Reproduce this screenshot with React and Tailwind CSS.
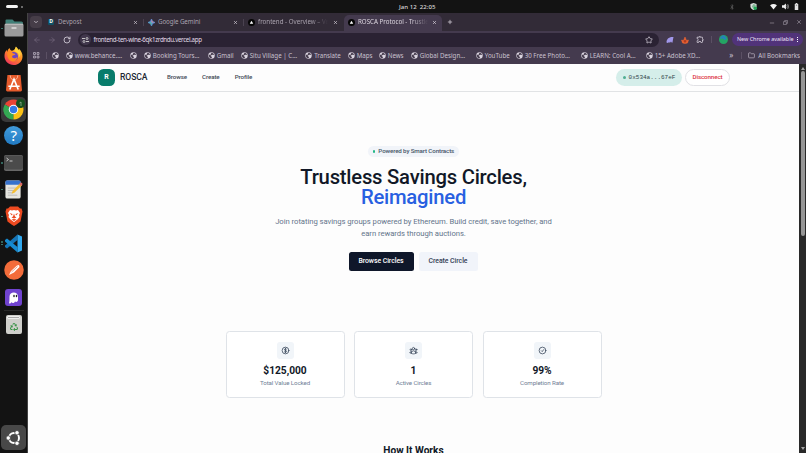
import { FaRecycle, FaBluetoothB } from 'react-icons/fa';
import { HiOutlineCheckCircle, HiOutlineCurrencyDollar, HiOutlineUserGroup } from 'react-icons/hi2';
import { MdOutlineExtension } from 'react-icons/md';
import {
  ArrowLeft,
  ArrowRight,
  ChevronDown,
  Folder,
  Minus,
  Plus,
  RotateCw,
  Star,
  X,
} from 'lucide-react';

const bookmarks = [
  { label: '', box: 'w-[14px]', text: '' },
  { label: 'www.behance.…', box: 'w-[64px]', text: 'w-[50px]' },
  { label: '', box: 'w-[14px]', text: '' },
  { label: 'Booking Tours…', box: 'w-[64px]', text: 'w-[50px]' },
  { label: 'Gmail', box: 'w-[33px]', text: 'w-[20px]' },
  { label: 'Situ Village | C…', box: 'w-[64.5px]', text: 'w-[50px]' },
  { label: 'Translate', box: 'w-[42.5px]', text: 'w-[30px]' },
  { label: 'Maps', box: 'w-[31px]', text: 'w-[20px]' },
  { label: 'News', box: 'w-[32px]', text: 'w-[20px]' },
  { label: 'Global Design…', box: 'w-[65px]', text: 'w-[50px]' },
  { label: 'YouTube', box: 'w-[40px]', text: 'w-[30px]' },
  { label: '30 Free Photo…', box: 'w-[65px]', text: 'w-[50px]' },
  { label: 'LEARN: Cool A…', box: 'w-[65px]', text: 'w-[50px]' },
  { label: '15+ Adobe XD…', box: 'w-[65px]', text: 'w-[50px]' },
];

const stats = [
  { icon: HiOutlineCurrencyDollar, value: '$125,000', label: 'Total Value Locked' },
  { icon: HiOutlineUserGroup, value: '1', label: 'Active Circles' },
  { icon: HiOutlineCheckCircle, value: '99%', label: 'Completion Rate' },
];

const Globe = () => (
  <svg viewBox="0 0 16 16" className="size-[7px] shrink-0">
    <circle cx="8" cy="8" r="7.3" fill="#d9d3de" />
    <path d="M2 6c3 0 5 1 5 3s2 1 2 3-1 2-2 2C4 14 1 10 2 6zM8 1.8c3 0 5 2 6 4.700-2 1-3-.5-4 0s-1 1.500-2.500 1S5 5.500 6.500 4.500 7 2.500 8 1.800z" fill="#483e50" />
  </svg>
);

const VercelMark = () => (
  <svg viewBox="0 0 16 16" className="size-[7px] shrink-0">
    <circle cx="8" cy="8" r="8" fill="#050505" />
    <path d="M8 4l4 7H4z" fill="#fff" />
  </svg>
);

const TopBar = () => (
  <div className="flex h-[13px] shrink-0 items-center bg-[#131313] text-[#d8d8d8]">
    <div className="flex w-[399px] items-center gap-[3px] pl-[6px]">
      <span className="h-[3.500px] w-[12px] rounded-full bg-[#f2f2f2]" />
      <span className="size-[2px] rounded-full bg-[#8b8b8b]" />
    </div>
    <div className="whitespace-pre text-[6.100px] font-medium">Jan 12  22:05</div>
    <div className="ml-auto flex items-center pr-[7px]">
      <FaBluetoothB className="mr-[15px] size-[6px] text-[#606060]" />
      <svg viewBox="0 0 16 16" className="mr-[13px] size-[7px]">
        <path d="M8 0l7 2v6c0 4-4 7-7 8-3-1-7-4-7-8V2z" fill="#d9dfdc" />
        <path d="M8 2l5 2v4L7 12 4 8z" fill="#82b795" />
        <circle cx="12" cy="12" r="4" fill="#25a859" />
      </svg>
      <svg viewBox="0 0 16 14" className="mr-[5.500px] h-[6px] w-[7px]">
        <path d="M0 3q8-6 16 0L8 13z" fill="#f2f2f2" />
      </svg>
      <svg viewBox="0 0 16 16" className="mr-[5px] size-[7px]">
        <path d="M0 5h4l5-4v14l-5-4H0z" fill="#eee" />
        <path d="M11 5q2 3 0 6M13 2.500q4 5.500 0 11" fill="none" stroke="#bbb" strokeWidth="1.600" />
      </svg>
      <svg viewBox="0 0 10 16" className="h-[7px] w-[5px]">
        <path d="M3 0h4v2h2v14H1V2h2z" fill="#e4e4e4" />
        <path d="M3.500 4h3v2h-3z" fill="#777" />
      </svg>
    </div>
  </div>
);

const DockItem = ({ dots = 0, active = false, children }) => (
  <div className="flex h-[26.860px] shrink-0 items-center">
    <div className="flex w-[3.500px] flex-col items-center gap-[1px]">
      {Array.from({ length: dots }, (_, i) => (
        <span key={i} className="size-[1.700px] rounded-full bg-[#3f8377]" />
      ))}
    </div>
    <div
      className={
        active
          ? '-ml-[2.500px] flex size-[25px] items-center justify-center rounded-[5px] bg-[#393939]'
          : 'flex w-[20.500px] items-center justify-center'
      }
    >
      {children}
    </div>
  </div>
);

const Dock = () => (
  <aside className="flex w-[28px] shrink-0 flex-col border-r border-[#444] bg-[#131313] pt-[2px]">
    <DockItem dots={1}>
      <svg viewBox="0 0 40 36" className="h-[18px] w-[20px]">
        <path d="M3 3q0-2 2-2h12l4 4h14q3 0 3 3v8H3z" fill="#408078" />
        <rect x="1" y="9" width="38" height="26" rx="3" fill="#9b9b9b" />
        <path d="M2 10h36v2H2z" fill="#b8b8b8" />
        <path d="M15 17h10v2H15z" fill="#fff" />
      </svg>
    </DockItem>
    <DockItem>
      <svg viewBox="0 0 40 40" className="size-[19px]">
        <defs>
          <linearGradient id="fox" x1="0.9" y1="0" x2="0.200" y2="1">
            <stop offset="0" stopColor="#ffe34a" />
            <stop offset="0.450" stopColor="#ff8b24" />
            <stop offset="1" stopColor="#ef3060" />
          </linearGradient>
        </defs>
        <path d="M25 1c3 3 5 5 6 8 1-1 1-2 1-3 5 6 7 11 7 16 0 11-9 18-19 18S1 32 1 21C1 15 3 11 6 8c0 2 0 3 1 4 1-4 2-6 5-8 0 3 2 5 5 6 4-1 7-3 8-9z" fill="url(#fox)" />
        <circle cx="20" cy="22" r="9.500" fill="#6b45c7" />
        <path d="M7 14c5-4 10-2 12 2 3 0 4 1 5 2-2 2-7 1-7 4 0 4 7 5 11 1 0 7-6 11-12 9S6 22 7 14z" fill="#ff8a20" />
        <path d="M24 12c6 1 9 7 6 12 4-1 6-7 4-12-3-5-7-6-9-10-2 4-4 7-1 10z" fill="#ffd43a" />
      </svg>
    </DockItem>
    <DockItem>
      <svg viewBox="0 0 34 40" className="h-[19px] w-[16px]">
        <path d="M3 4h28l3 32q0 3-3 3H3q-3 0-3-3z" fill="#e65b2c" />
        <path d="M9 5q0 9 8 9t8-9" fill="none" stroke="#ffc0a5" strokeWidth="2" />
        <path d="M8 35l9-22 9 22M5 28h24" fill="none" stroke="#fff" strokeWidth="3.500" />
      </svg>
    </DockItem>
    <DockItem dots={1} active>
      <svg viewBox="0 0 44 42" className="h-[21px] w-[22px]">
        <path d="M21 21L3.700 11A20 20 0 0 1 38.300 11z" fill="#e94335" />
        <path d="M21 21L3.700 11A20 20 0 0 0 21 41z" fill="#34a853" />
        <path d="M21 21l17.300-10A20 20 0 0 1 21 41z" fill="#fbc116" />
        <path d="M21 12h17v6H21z" fill="#e94335" />
        <path d="M5 12l9 14 7 5-5 9C7 38 1 30 1 21c0-4 1-6 4-9z" fill="#34a853" />
        <circle cx="21" cy="21" r="9.500" fill="#fff" />
        <circle cx="21" cy="21" r="7.500" fill="#3478e5" />
        <circle cx="35" cy="9" r="9" fill="#17501f" />
        <path d="M33 8l3-2v8" fill="none" stroke="#9bb99e" strokeWidth="1.500" />
      </svg>
    </DockItem>
    <DockItem>
      <div className="flex size-[19px] items-center justify-center rounded-full bg-linear-to-b from-[#409bdb] to-[#217ac2] text-[15px] leading-none text-white">?</div>
    </DockItem>
    <DockItem dots={1}>
      <svg viewBox="0 0 38 32" className="h-[16px] w-[19px]">
        <rect width="38" height="32" rx="4" fill="#686868" />
        <rect y="1" width="38" height="28" rx="4" fill="#4b4b4b" />
        <path d="M5 6l4 3-4 3M11 12h6" fill="none" stroke="#ddd" strokeWidth="1.700" />
      </svg>
    </DockItem>
    <DockItem dots={1}>
      <svg viewBox="0 0 38 40" className="h-[19px] w-[19px]">
        <rect x="2" y="1" width="32" height="38" rx="4" fill="#e6e5e0" />
        <path d="M2 10V4q0-3 3-3h26q3 0 3 3v6z" fill="#3672cd" />
        <path d="M7 17h19M7 22h13M7 27h10M7 32h20" stroke="#aaa" strokeWidth="1.500" />
        <path d="M15 29l2-6L33 7l4 4-16 16z" fill="#f5be35" />
        <path d="M31 9l3-4q4 0 4 4l-3 4z" fill="#d96868" />
      </svg>
    </DockItem>
    <DockItem dots={1}>
      <svg viewBox="0 0 36 40" className="h-[20px] w-[18px]">
        <path d="M10 1h16l4 4h3l2 6-4 20-8 6-5 3-5-3-8-6L1 11l2-6h3z" fill="#ee4a20" />
        <path d="M10 8l4 1 4-1 4 1 4-1 4 6-2 4 1 4-4 5-7 5-7-5-4-5 1-4-2-4z" fill="#fff" />
        <path d="M9 14l6 2-1 3zM27 14l-6 2 1 3zM18 15l2 6 3 2-5 2-5-2 3-2zM13 27l5-1 5 1-5 3z" fill="#ee4a20" />
      </svg>
    </DockItem>
    <DockItem dots={2}>
      <svg viewBox="0 0 38 38" className="size-[19px]">
        <path d="M27 1v11L6 29l-4-3v-3L27 1z" fill="#1575b7" />
        <path d="M27 37V26L6 9l-4 3v3l25 22z" fill="#168bd1" />
        <path d="M27 1l9 4v28l-9 4z" fill="#31a8ee" />
      </svg>
    </DockItem>
    <DockItem>
      <svg viewBox="0 0 40 40" className="size-[20px]">
        <circle cx="20" cy="20" r="19.500" fill="#f36c3a" />
        <path d="M10 30l4-8L26 11l4-1 1 4-11 11zM10 30l10-5" fill="#fff" />
        <path d="M15 24l12-11" stroke="#e9845f" strokeWidth="1.500" />
      </svg>
    </DockItem>
    <DockItem>
      <svg viewBox="0 0 34 34" className="size-[17px]">
        <rect width="34" height="34" rx="6" fill="#7043cf" />
        <path d="M8 28q1-2 1-13c0-11 17-11 17 0v7c0 3-3 5-6 3-2 4-6 4-7 1-1 3-4 4-5 2z" fill="#fff" />
        <ellipse cx="18" cy="14" rx="1.500" ry="2.500" fill="#222" />
        <ellipse cx="23" cy="14" rx="1.500" ry="2.500" fill="#222" />
      </svg>
    </DockItem>
    <div className="ml-[4px] h-px w-[20px] shrink-0 bg-[#292929]" />
    <DockItem>
      <div className="flex h-[19px] w-[16px] flex-col items-center rounded-[2px] bg-[#cfcfcb] pt-[1px]">
        <span className="h-[2.500px] w-[13px] rounded-[1px] border border-[#eee] bg-[#aaa]" />
        <FaRecycle className="mt-[4px] size-[8px] text-[#3b9348]" />
      </div>
    </DockItem>
    <div className="mt-auto mb-[3px] ml-[1px] flex size-[25px] items-center justify-center rounded-[5px] bg-[#484848]">
      <svg viewBox="0 0 32 32" className="size-[16px]">
        <circle cx="16" cy="16" r="10" fill="none" stroke="#fff" strokeWidth="4" />
        <g fill="#fff" stroke="#484848" strokeWidth="1.800">
          <circle cx="4.500" cy="16" r="4.500" />
          <circle cx="22" cy="5.500" r="4.500" />
          <circle cx="22" cy="26.500" r="4.500" />
        </g>
      </svg>
    </div>
  </aside>
);

const Tabs = () => (
  <div className="flex h-[18px] shrink-0 items-center bg-[#322b37] text-[6.200px] text-[#aaa3ae]">
    <div className="ml-[2px] flex size-[12px] items-center justify-center rounded-[4px] bg-[#463d48]">
      <ChevronDown className="size-[6px] text-[#d8d2db]" strokeWidth={3} />
    </div>
    <div className="flex h-[16px] w-[101px] items-center pr-[5px] pl-[6px]">
      <span className="flex size-[6px] items-center justify-center rounded-[1px] bg-[#105064] text-[5px] font-bold text-white">D</span>
      <span className="ml-[4px]">Devpost</span>
      <X className="ml-auto size-[5px] text-[#d6d0d9]" strokeWidth={3} />
    </div>
    <span className="h-[7px] w-px bg-[#4a4250]" />
    <div className="flex h-[16px] w-[99px] items-center pr-[5px] pl-[4px]">
      <svg viewBox="0 0 16 16" className="size-[7px]">
        <path d="M8 0q1 7 8 8-7 1-8 8-1-7-8-8 7-1 8-8z" fill="#5d9df2" stroke="#5d9df2" strokeWidth="1.500" />
        <path d="M8 0q1 7 8 8H8z" fill="#d88181" />
        <path d="M0 8h8v8q-1-7-8-8z" fill="#57b577" />
      </svg>
      <span className="ml-[3px] tracking-[-0.08px]">Google Gemini</span>
      <X className="ml-auto size-[5px] text-[#d6d0d9]" strokeWidth={3} />
    </div>
    <span className="h-[7px] w-px bg-[#4a4250]" />
    <div className="flex h-[16px] w-[100px] items-center pr-[6px] pl-[4px]">
      <VercelMark />
      <span className="ml-[3px] w-[70px] overflow-hidden mask-r-from-75% whitespace-nowrap">frontend - Overview – Vercel</span>
      <X className="ml-auto size-[5px] text-[#d6d0d9]" strokeWidth={3} />
    </div>
    <div className="mt-[2px] flex h-[16px] w-[98px] items-center rounded-t-[5px] bg-[#443a4e] pr-[5px] pb-[2px] pl-[4px] text-[#ded8e1]">
      <VercelMark />
      <span className="ml-[3px] w-[70px] overflow-hidden mask-r-from-75% whitespace-nowrap">ROSCA Protocol - Trustless</span>
      <X className="ml-auto size-[5px]" strokeWidth={3} />
    </div>
    <Plus className="ml-[5px] size-[6px] text-[#d6d0d9]" strokeWidth={3} />
    <div className="ml-auto flex items-center gap-[8px] pr-[4px] text-[#8d8592]">
      <Minus className="mt-[2px] size-[6px]" strokeWidth={3} />
      <svg viewBox="0 0 12 12" className="size-[5px]">
        <path d="M1 4h7v7H1zM4 4V1h7v7H8" fill="none" stroke="currentColor" strokeWidth="1.800" />
      </svg>
      <X className="size-[6px]" strokeWidth={3} />
    </div>
  </div>
);

const Toolbar = () => (
  <div className="flex h-[17px] shrink-0 items-center bg-[#443a4e] text-[#d6d0dc]">
    <ArrowLeft className="ml-[5px] size-[8px] text-[#776b80]" />
    <ArrowRight className="ml-[7px] size-[8px] text-[#776b80]" />
    <RotateCw className="ml-[7px] size-[8px]" strokeWidth={2.500} />
    <div className="ml-[7px] flex h-[14px] w-[581px] items-center rounded-full bg-[#2a2233]">
      <span className="ml-[2px] flex size-[11px] items-center justify-center rounded-full bg-[#41374c]">
        <svg viewBox="0 0 14 12" className="h-[6px] w-[7px]">
          <path d="M0 3h6M8 9h6" stroke="#ddd" strokeWidth="1.700" />
          <g fill="none" stroke="#ddd" strokeWidth="1.500">
            <circle cx="10" cy="3" r="2" />
            <circle cx="4" cy="9" r="2" />
          </g>
        </svg>
      </span>
      <span className="ml-[2.500px] text-[6.200px] tracking-[-0.33px] text-[#e3dde8]">frontend-ten-wine-6qk1zrdndu.vercel.app</span>
      <Star className="mr-[6px] ml-auto size-[8px]" strokeWidth={2.200} />
    </div>
    <svg viewBox="0 0 16 16" className="ml-[7px] size-[8px]">
      <path d="M1 13C1 6 6 1 15 2q-1 4-2 11-2 1-3-2-2 4-4 1-2 3-5 1z" fill="#a197ea" />
    </svg>
    <svg viewBox="0 0 16 16" className="ml-[7px] size-[8px]">
      <path d="M1 8l4 1 3-7 3 7 4-1-2 6-5 1-5-1z" fill="#ee6432" stroke="#ee6432" />
      <path d="M5 10l3-3 3 3-1 3H6z" fill="#b13b22" />
    </svg>
    <MdOutlineExtension className="ml-[7px] size-[8.500px]" />
    <span className="ml-[6px] h-[7px] w-px bg-[#5b5064]" />
    <svg viewBox="0 0 16 16" className="ml-[7px] size-[9px]">
      <circle cx="8" cy="8" r="8" fill="#24a464" />
      <path d="M3 3q4-5 8-1l3 5-4 2-3-3-5 1z" fill="#2583b8" />
    </svg>
    <div className="ml-auto mr-[3px] flex h-[13.500px] w-[71px] items-center rounded-full bg-[#51337a] pl-[5px]">
      <span className="text-[5.400px] whitespace-nowrap text-[#eee5f8]">New Chrome available</span>
      <span className="ml-[3px] flex flex-col gap-[1px]">
        <i className="size-[1px] bg-white" />
        <i className="size-[1px] bg-white" />
        <i className="size-[1px] bg-white" />
      </span>
    </div>
  </div>
);

const Bookmarks = () => (
  <div className="flex h-[16px] shrink-0 items-center bg-[#443a4e] pb-px text-[6.200px] text-[#c9c1ce]">
    <svg viewBox="0 0 12 12" className="ml-[5px] size-[6.500px]">
      <path d="M1 1h3.500v3.500H1zM7.500 1H11v3.500H7.500zM1 7.500h3.500V11H1zM7.500 7.500H11V11H7.500z" fill="none" stroke="#c9c1ce" strokeWidth="1.300" />
    </svg>
    <span className="mr-[5px] ml-[6px] h-[7px] w-px bg-[#5b5064]" />
    {bookmarks.map((item, i) => (
      <div key={i} className={`flex shrink-0 items-center gap-[2.200px] ${item.box}`}>
        <Globe />
        {item.label && <span className={`whitespace-nowrap ${item.text}`}>{item.label}</span>}
      </div>
    ))}
    <div className="ml-auto flex items-center pr-[6px]">
      <span className="text-[8px] leading-none">»</span>
      <span className="mr-[6px] ml-[8px] h-[7px] w-px bg-[#5b5064]" />
      <Folder className="mr-[3px] size-[7px]" strokeWidth={2.200} />
      <span className="whitespace-nowrap">All Bookmarks</span>
    </div>
  </div>
);

const Navbar = () => (
  <header className="flex h-[28px] shrink-0 items-center border-b border-[#e1e3e5] pr-[69px] pl-[70px] font-medium">
    <div className="flex size-[17px] items-center justify-center rounded-[5.500px] bg-[#087c6b] text-[7px] font-bold text-white">R</div>
    <span className="ml-[5px] w-[47px] text-[8.600px] tracking-[-0.1px] text-[#202632]">ROSCA</span>
    <nav className="flex gap-[15.200px] text-[6.200px] tracking-[-0.12px] text-[#424955]">
      <a href="#browse">Browse</a>
      <a href="#create">Create</a>
      <a href="#profile">Profile</a>
    </nav>
    <div className="ml-auto flex h-[17px] w-[66px] items-center justify-center gap-[3px] rounded-full bg-[#d5eeea] font-['Liberation_Mono',monospace] text-[6px] text-[#304549]">
      <span className="size-[3px] rounded-full bg-[#50ad92]" />
      0x534a...67eF
    </div>
    <button className="ml-[3px] h-[17px] w-[45px] rounded-full border border-[#e1e1e5] bg-white text-[6.200px] tracking-[-0.1px] text-[#dc3542]">Disconnect</button>
  </header>
);

const Hero = () => (
  <section className="flex shrink-0 flex-col items-center pt-[54px]">
    <div className="flex h-[11px] items-center gap-[3px] rounded-full bg-[#f1f4f9] px-[5px] text-[6.200px] font-medium tracking-[-0.13px] text-[#465468]">
      <span className="size-[2.500px] rounded-full bg-[#23b987]" />
      Powered by Smart Contracts
    </div>
    <h1 className="mt-[10px] text-center text-[20.250px] leading-[20.150px] font-medium tracking-[-0.23px] text-[#111827]">
      Trustless Savings Circles,
      <br />
      <span className="text-[#2860e1]">Reimagined</span>
    </h1>
    <p className="mt-[8.700px] text-center text-[7.700px] leading-[12px] tracking-[-0.05px] text-[#64748b]">
      Join rotating savings groups powered by Ethereum. Build credit, save together, and
      <br />
      earn rewards through auctions.
    </p>
    <div className="mt-[12px] flex gap-[5px] pr-[1px] text-[6.900px] font-medium tracking-[-0.05px]">
      <button className="h-[19px] w-[65px] rounded-[2.500px] bg-[#0f172a] text-white">Browse Circles</button>
      <button className="h-[19px] w-[59px] rounded-[2.500px] bg-[#f1f4fa] text-[#334155]">Create Circle</button>
    </div>
  </section>
);

const StatCard = ({ icon: Icon, value, label }) => (
  <div className="flex h-[67px] w-[119px] flex-col items-center rounded-[3.500px] border border-[#dfe3e8] bg-white pt-[10px]">
    <div className="flex size-[17px] shrink-0 items-center justify-center rounded-[3px] bg-[#f1f5f9] text-[#334155]">
      <Icon className="size-[9px]" strokeWidth={2} />
    </div>
    <div className="mt-[5px] text-[10.200px] leading-[13px] font-bold text-[#111827]">{value}</div>
    <div className="mt-[2px] text-[6.200px] leading-[9px] tracking-[-0.12px] text-[#718096]">{label}</div>
  </div>
);

export default function App() {
  return (
    <div className="flex h-[453px] w-[806px] flex-col overflow-hidden bg-[#131313] font-['Noto_Sans',sans-serif]">
      <TopBar />
      <div className="flex min-h-0 flex-1">
        <Dock />
        <div className="flex min-w-0 flex-1 flex-col">
          <Tabs />
          <Toolbar />
          <Bookmarks />
          <div className="flex min-h-0 flex-1">
            <main className="flex min-w-0 flex-1 flex-col overflow-hidden bg-[#fdfdfd] font-['Roboto',sans-serif]">
              <Navbar />
              <Hero />
              <section className="mt-[59.800px] flex shrink-0 justify-center gap-[9.500px]">
                {stats.map((stat) => (
                  <StatCard key={stat.label} {...stat} />
                ))}
              </section>
              <h2 className="mt-[46.200px] shrink-0 text-center text-[10.100px] leading-[14px] font-bold text-[#111827]">How It Works</h2>
            </main>
            <div className="flex w-[7px] shrink-0 flex-col items-center bg-[#292929]">
              <span className="mt-[3px] border-x-2 border-b-[3px] border-x-transparent border-b-[#a4a4a4]" />
              <span className="mt-[1px] h-[165px] w-[4px] rounded-full bg-[#969696]" />
              <span className="mt-auto mb-[3px] border-x-2 border-t-[3px] border-x-transparent border-t-[#a4a4a4]" />
            </div>
          </div>
        </div>
      </div>
    </div>
  );
}
